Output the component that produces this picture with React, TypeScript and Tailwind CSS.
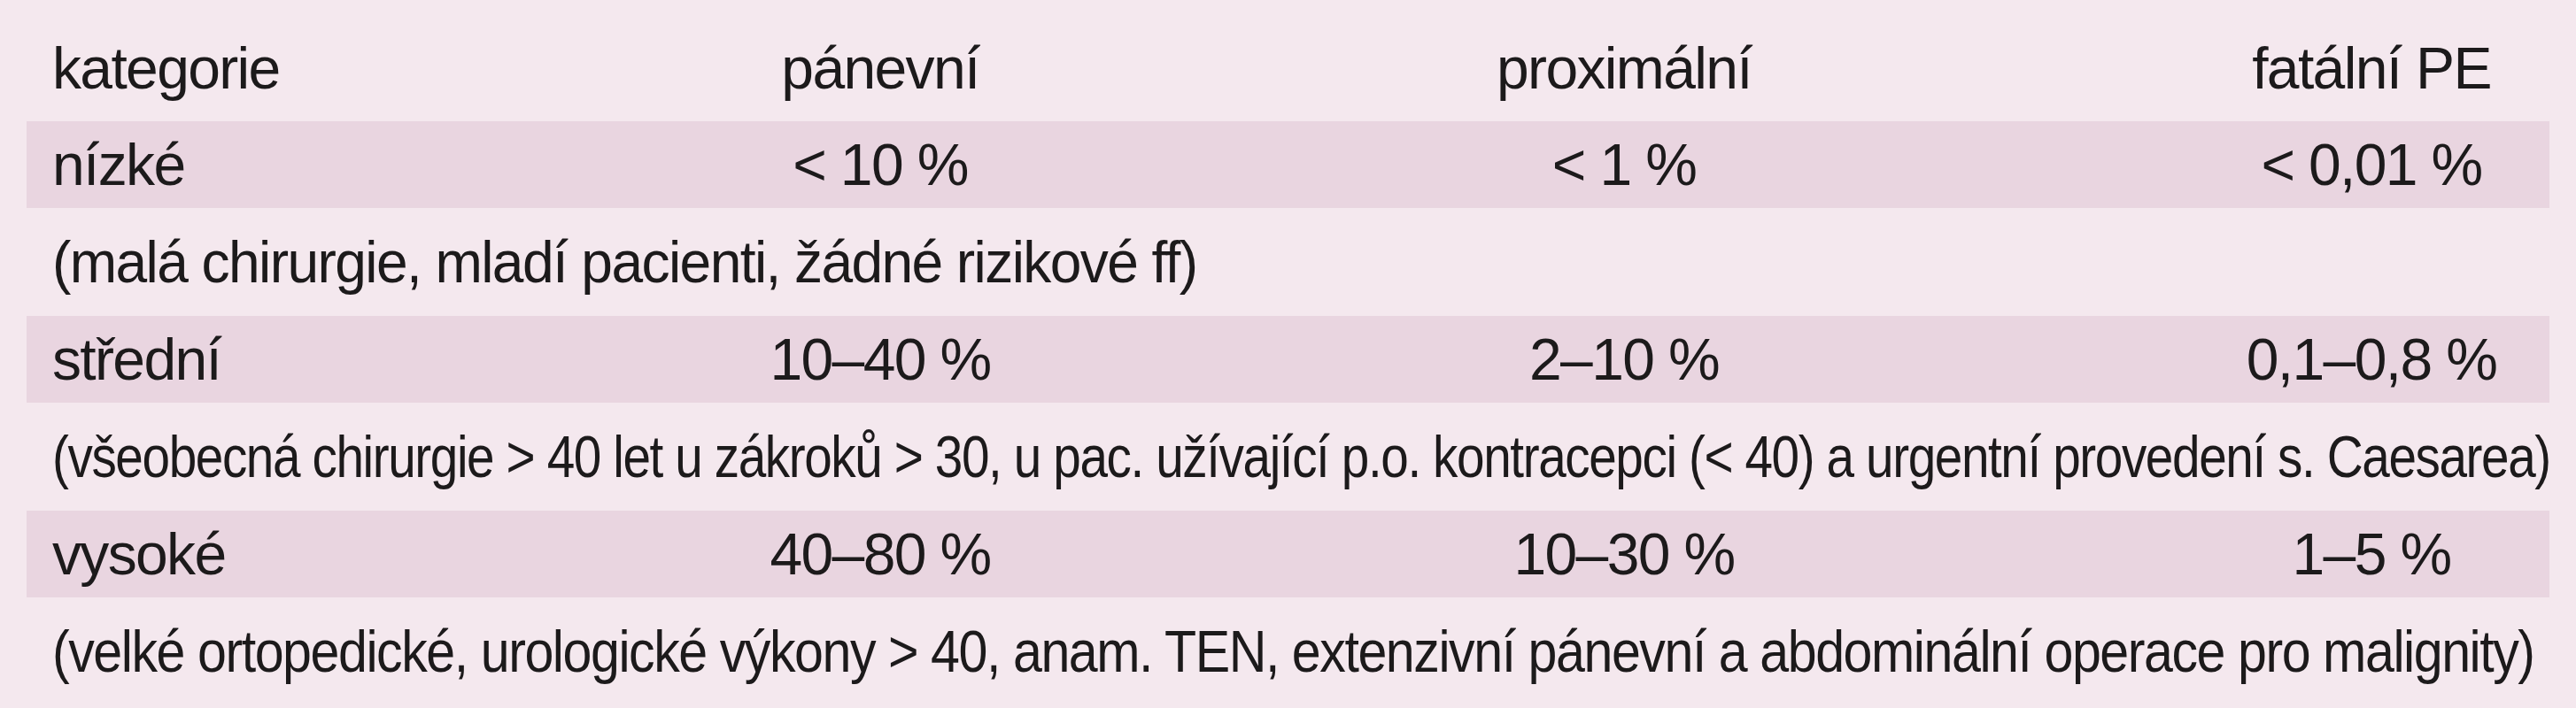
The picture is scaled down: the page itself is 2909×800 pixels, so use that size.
import { useLayoutEffect, useRef, useState } from 'react'

const rows = [
  {
    label: 'nízké',
    values: ['< 10 %', '< 1 %', '< 0,01 %'],
    note: '(malá chirurgie, mladí pacienti, žádné rizikové ff)',
    noteWidth: 1293,
  },
  {
    label: 'střední',
    values: ['10–40 %', '2–10 %', '0,1–0,8 %'],
    note: '(všeobecná chirurgie > 40 let u zákroků > 30, u pac. užívající p.o. kontracepci (< 40) a urgentní provedení s. Caesarea)',
    noteWidth: 2821,
  },
  {
    label: 'vysoké',
    values: ['40–80 %', '10–30 %', '1–5 %'],
    note: '(velké ortopedické, urologické výkony > 40, anam. TEN, extenzivní pánevní a abdominální operace pro malignity)',
    noteWidth: 2803,
  },
]

const cols = 'grid grid-cols-[758px_412px_1268px_420px]'

// squeezes a line of text horizontally so it ends where the printed one does
const FitText = ({ text, width }: { text: string; width: number }) => {
  const ref = useRef<HTMLSpanElement>(null)
  const [scale, setScale] = useState(1)

  useLayoutEffect(() => {
    if (ref.current) {
      const w = ref.current.offsetWidth
      if (w > 0) setScale(width / w)
    }
  }, [text, width])

  return (
    <span
      ref={ref}
      className="inline-block whitespace-nowrap origin-left"
      style={{ transform: `scaleX(${scale})` }}
    >
      {text}
    </span>
  )
}

const App = () => {
  return (
    <div
      className="w-[2909px] h-[800px] bg-[#f4e8ee] text-[#1c1a1b] pt-[17px] px-[30px] overflow-hidden"
      style={{ fontFamily: '"Liberation Sans", Arial, sans-serif' }}
    >
      <div className="text-[66px] leading-none tracking-[-0.025em]">
        {/* Header */}
        <div className={`${cols} h-[120px] items-center`}>
          <div className="pl-[29px]">kategorie</div>
          <div className="text-center">pánevní</div>
          <div className="text-center">proximální</div>
          <div className="text-center">fatální PE</div>
        </div>

        {rows.map((row) => (
          <div key={row.label}>
            <div className={`${cols} h-[98px] items-center bg-[#e9d5e0]`}>
              <div className="pl-[29px]">{row.label}</div>
              {row.values.map((v) => (
                <div key={v} className="text-center">
                  {v}
                </div>
              ))}
            </div>
            <div className="h-[122px] flex items-center pl-[29px] overflow-hidden">
              <FitText text={row.note} width={row.noteWidth} />
            </div>
          </div>
        ))}
      </div>
    </div>
  )
}

export default App
